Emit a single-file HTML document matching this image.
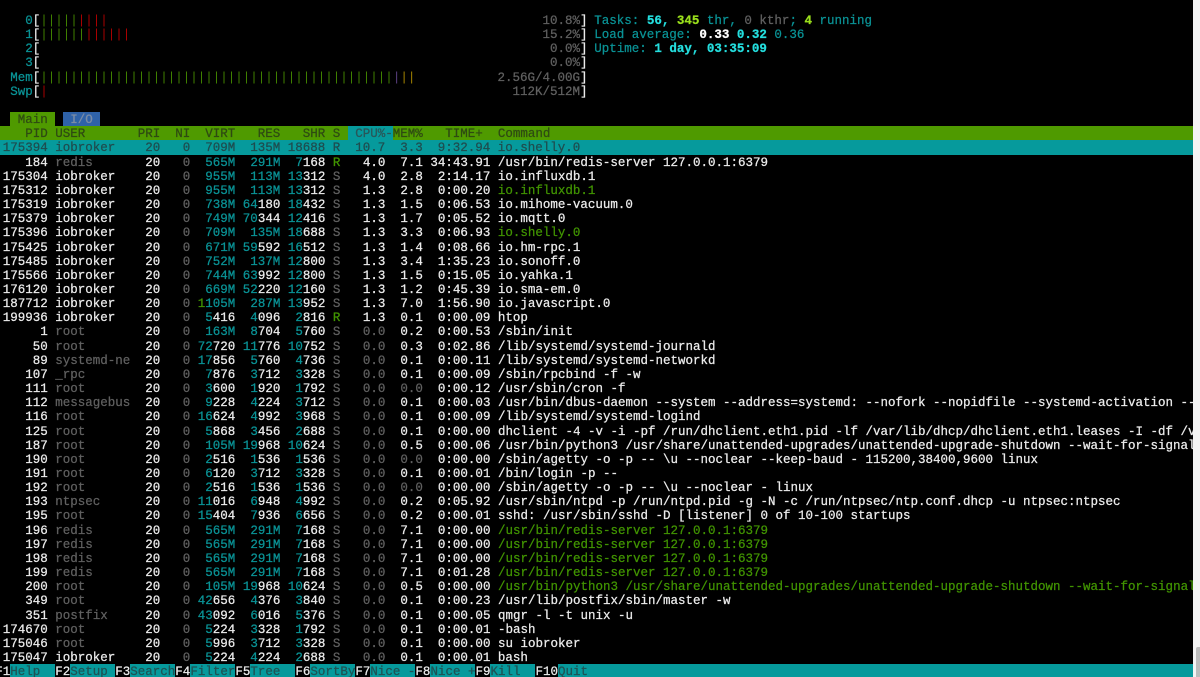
<!DOCTYPE html>
<html><head><meta charset="utf-8"><title>htop</title>
<style>
html,body{margin:0;padding:0;width:1200px;height:677px;overflow:hidden;background:#f4f4f4}
#t{position:absolute;left:0;top:0;width:1193px;height:677px;background:#000;overflow:hidden}
.r{position:absolute}
pre{position:absolute;margin:0;font:12.5px/14.16px "Liberation Mono",monospace;color:#ececec;white-space:pre;-webkit-text-stroke:.25px currentColor;filter:blur(.25px)}
i,u,s,em{font-style:normal;text-decoration:none}
i{color:#0a9396}
u{color:#606060}
s{color:#419400}
em{color:#2a5658}
#m{left:-4.8px;top:14px}
#v{left:400px;width:187.5px;top:14px;text-align:right;color:#606060}
#v b{font-weight:normal;color:#ececec}
#n{left:594.3px;top:14px;color:#0a9396}
.c{font-weight:bold;color:#24dede}
.w{font-weight:bold;color:#fff}
.y{font-weight:bold;color:#9adf1c}
.h{color:#2f4a12}
.x{color:#1f4c4e}
.k{color:#1f5254}
.a{color:#7a8ca6}
.bl{color:#a80000;-webkit-text-stroke:0}
.gb{color:#3f8000;-webkit-text-stroke:0}
.pb{color:#5a3f80;-webkit-text-stroke:0}
.yb{color:#a08000;-webkit-text-stroke:0}
#sb{position:absolute;left:1196px;top:647px;width:4px;height:30px;background:#bdbdbd;border-radius:2px 0 0 0}
</style></head>
<body>
<div id="t">
<div class="r" style="left:10px;top:112px;width:45px;height:14.3px;background:#4f9a00"></div>
<div class="r" style="left:62.5px;top:112px;width:37.5px;height:14.3px;background:#2f62a8"></div>
<div class="r" style="left:0;top:126.3px;width:1193px;height:14.1px;background:#4f9a00"></div>
<div class="r" style="left:347.5px;top:126.3px;width:45px;height:14.1px;background:#069a9c"></div>
<div class="r" style="left:0;top:140.4px;width:1193px;height:14.2px;background:#069a9c"></div>
<div class="r" style="left:10px;top:664.4px;width:45px;height:13px;background:#069a9c"></div>
<div class="r" style="left:70px;top:664.4px;width:45px;height:13px;background:#069a9c"></div>
<div class="r" style="left:130px;top:664.4px;width:45px;height:13px;background:#069a9c"></div>
<div class="r" style="left:190px;top:664.4px;width:45px;height:13px;background:#069a9c"></div>
<div class="r" style="left:250px;top:664.4px;width:45px;height:13px;background:#069a9c"></div>
<div class="r" style="left:310px;top:664.4px;width:45px;height:13px;background:#069a9c"></div>
<div class="r" style="left:370px;top:664.4px;width:45px;height:13px;background:#069a9c"></div>
<div class="r" style="left:430px;top:664.4px;width:45px;height:13px;background:#069a9c"></div>
<div class="r" style="left:490px;top:664.4px;width:45px;height:13px;background:#069a9c"></div>
<div class="r" style="left:557.5px;top:664.4px;width:635.5px;height:13px;background:#069a9c"></div>
<pre id="v">10.8%<b>]</b>
15.2%<b>]</b>
0.0%<b>]</b>
0.0%<b>]</b>
2.56G/4.00G<b>]</b>
112K/512M<b>]</b></pre>
<pre id="n">Tasks: <span class="c">56</span><span class="c">,</span> <span class="y">345</span> thr, <u>0</u> <u>kthr</u>; <span class="y">4</span> running
Load average: <span class="w">0.33</span> <span class="c">0.32</span> 0.36
Uptime: <span class="c">1 day, 03:35:09</span></pre>
<pre id="m">    <i>0</i>[<span class="gb">|||||</span><span class="bl">||||</span>
    <i>1</i>[<span class="gb">||||||</span><span class="bl">||||||</span>
    <i>2</i>[
    <i>3</i>[
  <i>Mem</i>[<span class="gb">|||||||||||||||||||||||||||||||||||||||||||||||</span><span class="pb">|</span><span class="yb">||</span>
  <i>Swp</i>[<span class="bl">|</span>

   <span class="h">Main</span>   <span class="a">I/O</span>
<span class="h">    PID USER       PRI  NI  VIRT   RES   SHR S</span> <em> CPU%-</em><span class="h">MEM%   TIME+  Command</span>
<span class="x"> 175394 iobroker    20   0  709M  135M 18688 R  10.7  3.3  9:32.94 io.shelly.0</span>
    184 <u>redis</u>       20 <u>  0</u> <i> 565M</i> <i> 291M</i>  <i>7</i>168 <s>R</s>   4.0  7.1 34:43.91 /usr/bin/redis-server 127.0.0.1:6379
 175304 iobroker    20 <u>  0</u> <i> 955M</i> <i> 113M</i> <i>13</i>312 <u>S</u>   4.0  2.8  2:14.17 io.influxdb.1
 175312 iobroker    20 <u>  0</u> <i> 955M</i> <i> 113M</i> <i>13</i>312 <u>S</u>   1.3  2.8  0:00.20 <s>io.influxdb.1</s>
 175319 iobroker    20 <u>  0</u> <i> 738M</i> <i>64</i>180 <i>18</i>432 <u>S</u>   1.3  1.5  0:06.53 io.mihome-vacuum.0
 175379 iobroker    20 <u>  0</u> <i> 749M</i> <i>70</i>344 <i>12</i>416 <u>S</u>   1.3  1.7  0:05.52 io.mqtt.0
 175396 iobroker    20 <u>  0</u> <i> 709M</i> <i> 135M</i> <i>18</i>688 <u>S</u>   1.3  3.3  0:06.93 <s>io.shelly.0</s>
 175425 iobroker    20 <u>  0</u> <i> 671M</i> <i>59</i>592 <i>16</i>512 <u>S</u>   1.3  1.4  0:08.66 io.hm-rpc.1
 175485 iobroker    20 <u>  0</u> <i> 752M</i> <i> 137M</i> <i>12</i>800 <u>S</u>   1.3  3.4  1:35.23 io.sonoff.0
 175566 iobroker    20 <u>  0</u> <i> 744M</i> <i>63</i>992 <i>12</i>800 <u>S</u>   1.3  1.5  0:15.05 io.yahka.1
 176120 iobroker    20 <u>  0</u> <i> 669M</i> <i>52</i>220 <i>12</i>160 <u>S</u>   1.3  1.2  0:45.39 io.sma-em.0
 187712 iobroker    20 <u>  0</u> <s>1</s><i>105M</i> <i> 287M</i> <i>13</i>952 <u>S</u>   1.3  7.0  1:56.90 io.javascript.0
 199936 iobroker    20 <u>  0</u>  <i>5</i>416  <i>4</i>096  <i>2</i>816 <s>R</s>   1.3  0.1  0:00.09 htop
      1 <u>root</u>        20 <u>  0</u> <i> 163M</i>  <i>8</i>704  <i>5</i>760 <u>S</u>  <u> 0.0</u>  0.2  0:00.53 /sbin/init
     50 <u>root</u>        20 <u>  0</u> <i>72</i>720 <i>11</i>776 <i>10</i>752 <u>S</u>  <u> 0.0</u>  0.3  0:02.86 /lib/systemd/systemd-journald
     89 <u>systemd-ne</u>  20 <u>  0</u> <i>17</i>856  <i>5</i>760  <i>4</i>736 <u>S</u>  <u> 0.0</u>  0.1  0:00.11 /lib/systemd/systemd-networkd
    107 <u>_rpc</u>        20 <u>  0</u>  <i>7</i>876  <i>3</i>712  <i>3</i>328 <u>S</u>  <u> 0.0</u>  0.1  0:00.09 /sbin/rpcbind -f -w
    111 <u>root</u>        20 <u>  0</u>  <i>3</i>600  <i>1</i>920  <i>1</i>792 <u>S</u>  <u> 0.0  0.0</u>  0:00.12 /usr/sbin/cron -f
    112 <u>messagebus</u>  20 <u>  0</u>  <i>9</i>228  <i>4</i>224  <i>3</i>712 <u>S</u>  <u> 0.0</u>  0.1  0:00.03 /usr/bin/dbus-daemon --system --address=systemd: --nofork --nopidfile --systemd-activation --
    116 <u>root</u>        20 <u>  0</u> <i>16</i>624  <i>4</i>992  <i>3</i>968 <u>S</u>  <u> 0.0</u>  0.1  0:00.09 /lib/systemd/systemd-logind
    125 <u>root</u>        20 <u>  0</u>  <i>5</i>868  <i>3</i>456  <i>2</i>688 <u>S</u>  <u> 0.0</u>  0.1  0:00.00 dhclient -4 -v -i -pf /run/dhclient.eth1.pid -lf /var/lib/dhcp/dhclient.eth1.leases -I -df /v
    187 <u>root</u>        20 <u>  0</u> <i> 105M</i> <i>19</i>968 <i>10</i>624 <u>S</u>  <u> 0.0</u>  0.5  0:00.06 /usr/bin/python3 /usr/share/unattended-upgrades/unattended-upgrade-shutdown --wait-for-signal
    190 <u>root</u>        20 <u>  0</u>  <i>2</i>516  <i>1</i>536  <i>1</i>536 <u>S</u>  <u> 0.0  0.0</u>  0:00.00 /sbin/agetty -o -p -- \u --noclear --keep-baud - 115200,38400,9600 linux
    191 <u>root</u>        20 <u>  0</u>  <i>6</i>120  <i>3</i>712  <i>3</i>328 <u>S</u>  <u> 0.0</u>  0.1  0:00.01 /bin/login -p --
    192 <u>root</u>        20 <u>  0</u>  <i>2</i>516  <i>1</i>536  <i>1</i>536 <u>S</u>  <u> 0.0  0.0</u>  0:00.00 /sbin/agetty -o -p -- \u --noclear - linux
    193 <u>ntpsec</u>      20 <u>  0</u> <i>11</i>016  <i>6</i>948  <i>4</i>992 <u>S</u>  <u> 0.0</u>  0.2  0:05.92 /usr/sbin/ntpd -p /run/ntpd.pid -g -N -c /run/ntpsec/ntp.conf.dhcp -u ntpsec:ntpsec
    195 <u>root</u>        20 <u>  0</u> <i>15</i>404  <i>7</i>936  <i>6</i>656 <u>S</u>  <u> 0.0</u>  0.2  0:00.01 sshd: /usr/sbin/sshd -D [listener] 0 of 10-100 startups
    196 <u>redis</u>       20 <u>  0</u> <i> 565M</i> <i> 291M</i>  <i>7</i>168 <u>S</u>  <u> 0.0</u>  7.1  0:00.00 <s>/usr/bin/redis-server 127.0.0.1:6379</s>
    197 <u>redis</u>       20 <u>  0</u> <i> 565M</i> <i> 291M</i>  <i>7</i>168 <u>S</u>  <u> 0.0</u>  7.1  0:00.00 <s>/usr/bin/redis-server 127.0.0.1:6379</s>
    198 <u>redis</u>       20 <u>  0</u> <i> 565M</i> <i> 291M</i>  <i>7</i>168 <u>S</u>  <u> 0.0</u>  7.1  0:00.00 <s>/usr/bin/redis-server 127.0.0.1:6379</s>
    199 <u>redis</u>       20 <u>  0</u> <i> 565M</i> <i> 291M</i>  <i>7</i>168 <u>S</u>  <u> 0.0</u>  7.1  0:01.28 <s>/usr/bin/redis-server 127.0.0.1:6379</s>
    200 <u>root</u>        20 <u>  0</u> <i> 105M</i> <i>19</i>968 <i>10</i>624 <u>S</u>  <u> 0.0</u>  0.5  0:00.00 <s>/usr/bin/python3 /usr/share/unattended-upgrades/unattended-upgrade-shutdown --wait-for-signal</s>
    349 <u>root</u>        20 <u>  0</u> <i>42</i>656  <i>4</i>376  <i>3</i>840 <u>S</u>  <u> 0.0</u>  0.1  0:00.23 /usr/lib/postfix/sbin/master -w
    351 <u>postfix</u>     20 <u>  0</u> <i>43</i>092  <i>6</i>016  <i>5</i>376 <u>S</u>  <u> 0.0</u>  0.1  0:00.05 qmgr -l -t unix -u
 174670 <u>root</u>        20 <u>  0</u>  <i>5</i>224  <i>3</i>328  <i>1</i>792 <u>S</u>  <u> 0.0</u>  0.1  0:00.01 -bash
 175046 <u>root</u>        20 <u>  0</u>  <i>5</i>996  <i>3</i>712  <i>3</i>328 <u>S</u>  <u> 0.0</u>  0.1  0:00.00 su iobroker
 175047 iobroker    20 <u>  0</u>  <i>5</i>224  <i>4</i>224  <i>2</i>688 <u>S</u>  <u> 0.0</u>  0.1  0:00.01 bash
F1<span class="k">Help  </span>F2<span class="k">Setup </span>F3<span class="k">Search</span>F4<span class="k">Filter</span>F5<span class="k">Tree  </span>F6<span class="k">SortBy</span>F7<span class="k">Nice -</span>F8<span class="k">Nice +</span>F9<span class="k">Kill  </span>F10<span class="k">Quit</span></pre>
</div>
<div id="sb"></div>
</body></html>
